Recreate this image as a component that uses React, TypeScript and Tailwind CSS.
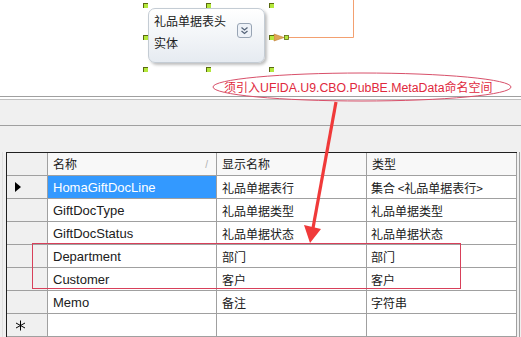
import React from 'react'

const latin = "font-['Liberation_Sans','Noto_Sans_CJK_SC',sans-serif]"
const cjk = "font-['Noto_Sans_CJK_SC','Liberation_Sans',sans-serif]"

interface Row {
  name: string
  display: string
  type: string
  marker?: 'current' | 'new'
  selected?: boolean
}

const rows: Row[] = [
  { name: 'HomaGiftDocLine', display: '礼品单据表行', type: '集合 <礼品单据表行>', marker: 'current', selected: true },
  { name: 'GiftDocType', display: '礼品单据类型', type: '礼品单据类型' },
  { name: 'GiftDocStatus', display: '礼品单据状态', type: '礼品单据状态' },
  { name: 'Department', display: '部门', type: '部门' },
  { name: 'Customer', display: '客户', type: '客户' },
  { name: 'Memo', display: '备注', type: '字符串' },
  { name: '', display: '', type: '', marker: 'new' },
]

const Handle = () => (
  <div className="w-[5px] h-[5px] bg-[#b4e83c] border-l border-t border-[#5a6a10]" />
)

function EntityNode() {
  // selection frame with 8 handles, node sits inside it
  return (
    <div className="absolute left-[143px] top-[3px] w-[131px] h-[69px] flex flex-col justify-between">
      <div className="flex justify-between"><Handle /><Handle /><Handle /></div>
      <div className="flex justify-between"><Handle /><Handle /></div>
      <div className="flex justify-between"><Handle /><Handle /><Handle /></div>
      <div className="absolute left-[5px] top-[5px] w-[117px] h-[55px] rounded-[7px] border border-[#c4ccd4] bg-gradient-to-b from-white to-[#e6ebf1] shadow-[2px_2px_3px_rgba(0,0,0,0.25)] flex justify-between pl-[5px] pr-[12px] pt-[1px]">
        <div className={`${cjk} text-[12px] text-[#202020] leading-[22px]`}>
          <div>礼品单据表头</div>
          <div>实体</div>
        </div>
        <div className="mt-[13px] w-[15px] h-[15px] rounded-[3px] border border-[#98a4b4] bg-[#eef2f8] flex items-center justify-center">
          <svg width="9" height="9" viewBox="0 0 9 9" fill="none" stroke="#56657a" strokeWidth="1.3">
            <path d="M1.5 1.5 L4.5 4 L7.5 1.5" />
            <path d="M1.5 5 L4.5 7.5 L7.5 5" />
          </svg>
        </div>
      </div>
    </div>
  )
}

function Canvas() {
  return (
    <div className="relative h-[97px] bg-white border-b border-[#a0a0a0]">
      <svg className="absolute left-0 top-0" width="521" height="96">
        <path d="M288 37.5 H353.5 V0" stroke="#f3a070" strokeWidth="1" fill="none" />
        <path d="M274 34 L284 37.5 L274 41 Z" fill="#e0a456" stroke="#c08030" strokeWidth="0.6" />
        <rect x="284.5" y="35.5" width="4" height="4" fill="#b4e83c" stroke="#5a6a10" strokeWidth="0.8" />
      </svg>
      <EntityNode />
    </div>
  )
}

function Marker({ kind }: { kind?: 'current' | 'new' }) {
  if (kind === 'current') {
    return (
      <svg width="6" height="10" viewBox="0 0 6 10"><path d="M0 0 L6 5 L0 10 Z" fill="#000" /></svg>
    )
  }
  if (kind === 'new') {
    return (
      <svg width="11" height="11" viewBox="0 0 11 11" stroke="#000" strokeWidth="1">
        <path d="M5.5 0.5 V10.5 M1 3 L10 8 M1 8 L10 3" />
      </svg>
    )
  }
  return null
}

function Grid() {
  return (
    <div className="ml-[6px] mt-[26px] flex">
      <div className="border-l border-t border-[#202020] bg-white">
        <div className={`flex h-[23px] bg-[#f8f8f8] ${cjk} text-[12px] text-[#202020]`}>
          <div className="w-[41px] border-r border-b border-[#a0a0a0] bg-[#f0f0f0]" />
          <div className="w-[169px] border-r border-b border-[#a0a0a0] flex items-center justify-between pl-[5px] pr-[8px]">
            <span>名称</span>
            <span className={`${latin} text-[10px] text-[#b0b0b0]`}>/</span>
          </div>
          <div className="w-[150px] border-r border-b border-[#a0a0a0] flex items-center pl-[5px]">显示名称</div>
          <div className="w-[150px] border-r border-b border-[#a0a0a0] flex items-center pl-[5px]">类型</div>
        </div>
        {rows.map((r, i) => (
          <div key={i} className="flex h-[23px]">
            <div className="w-[41px] border-r border-b border-[#a0a0a0] bg-[#f0f0f0] flex items-center pl-[8px]">
              <Marker kind={r.marker} />
            </div>
            <div className={`w-[169px] border-r border-b border-[#a0a0a0] flex items-center pl-[5px] pt-[1px] text-[13px] ${latin} ${r.selected ? 'bg-[#3399ff] text-white' : 'text-[#202020]'}`}>
              {r.name}
            </div>
            <div className={`w-[150px] border-r border-b border-[#a0a0a0] flex items-center pl-[5px] pt-[1px] text-[12px] text-[#202020] ${cjk}`}>
              {r.display}
            </div>
            <div className={`w-[150px] border-r border-b border-[#a0a0a0] flex items-center pl-[4px] pt-[1px] text-[12px] text-[#202020] ${cjk}`}>
              {r.type}
            </div>
          </div>
        ))}
      </div>
      <div className="ml-[2px] border-l border-[#a0a0a0] h-[200px]" />
    </div>
  )
}

function Annotations() {
  return (
    <div className="absolute inset-0 pointer-events-none">
      <svg className="absolute left-0 top-0" width="521" height="337">
        <ellipse cx="362" cy="87" rx="149" ry="14" fill="none" stroke="#d8506a" strokeWidth="1" />
        <path d="M336 102 L313 228" stroke="#f03a3a" strokeWidth="3.2" fill="none" />
        <path d="M304 225 L321 229 L310 243 Z" fill="#f03a3a" />
        <rect x="32.5" y="243.5" width="428" height="45" fill="none" stroke="#d8405a" strokeWidth="1" />
      </svg>
      <div className={`absolute left-[224px] top-[78px] text-[12.3px] leading-[18px] text-[#e0283c] whitespace-nowrap ${latin}`}>
        <span className={`${cjk} text-[12px]`}>须引入</span>UFIDA.U9.CBO.PubBE.MetaData<span className={`${cjk} text-[12px]`}>命名空间</span>
      </div>
    </div>
  )
}

export default function App() {
  return (
    <div className="relative w-[521px] h-[337px] overflow-hidden bg-[#f0f0f0]">
      <Canvas />
      <div className="h-[3px] bg-white border-b border-[#c0c0c0]" />
      <div className="h-[26px] bg-[#f0f0f0] border-b border-[#a0a0a0]" />
      <div className="border-l border-[#e0e0e0] ml-[2px]">
        <div className="-ml-[3px]">
          <Grid />
        </div>
      </div>
      <Annotations />
    </div>
  )
}
